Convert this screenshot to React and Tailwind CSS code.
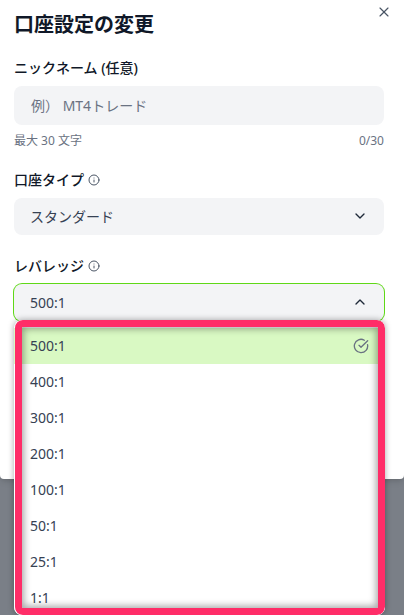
import React from 'react'
import { useState } from 'react';
import { ChevronDown, ChevronUp, CircleCheckBig, Info, X } from 'lucide-react';

const leverages = ["500:1", "400:1", "300:1", "200:1", "100:1", "50:1", "25:1", "1:1"];

export default function App() {

  const [nickname, setNickname] = useState("");
  const [accountType, setAccountType] = useState("standard");
  const [leverage, setLeverage] = useState("500:1");
  const [menuOpen, setMenuOpen] = useState(true);

  const labelClasses = "flex items-center gap-1 text-sm font-medium leading-5 text-gray-900";
  const selectClasses = "block w-full h-[37px] appearance-none rounded-lg bg-gray-100 pl-4 pr-10 text-sm text-gray-700 outline-none";

  // Own option list instead of the browser's popup
  const toggleMenu = (e) => {
    e.preventDefault();
    setMenuOpen(!menuOpen);
  }

  const handlePick = (value) => {
    setLeverage(value);
    setMenuOpen(false);
  }

  return (
    <div className="min-h-screen bg-[#7a7f87] font-['Noto_Sans','Noto_Sans_CJK_JP',sans-serif]">
      <div role="dialog" aria-labelledby="dialog-title" className="relative bg-white pl-3.5 pr-5 pt-2.5 pb-[158px] rounded-b-sm shadow-md">

        <button type="button" aria-label="閉じる" className="absolute right-3 top-1 text-gray-600">
          <X className="w-4 h-4" strokeWidth={1.75} />
        </button>

        <h1 id="dialog-title" className="text-xl font-bold leading-[30px] text-gray-900">口座設定の変更</h1>

        {/* Nickname */}
        <div className="mt-[18px]">
          <label htmlFor="nickname" className={labelClasses}>ニックネーム (任意)</label>
          <input
            id="nickname"
            type="text"
            maxLength={30}
            value={nickname}
            onChange={(e) => setNickname(e.target.value)}
            placeholder="例） MT4トレード"
            className="mt-2 block w-full h-[39px] rounded-lg bg-gray-100 px-[17px] text-sm text-gray-700 placeholder:text-gray-500 outline-none"
          />
          <div className="mt-2 flex justify-between text-xs leading-4 text-gray-500">
            <span>最大 30 文字</span>
            <span>{nickname.length}/30</span>
          </div>
        </div>

        {/* Account type */}
        <div className="mt-[21px]">
          <label htmlFor="account-type" className={labelClasses}>
            口座タイプ
            <Info className="w-3 h-3 text-gray-600" strokeWidth={2} />
          </label>
          <div className="relative mt-2">
            <select
              id="account-type"
              value={accountType}
              onChange={(e) => setAccountType(e.target.value)}
              className={selectClasses}
            >
              <option value="standard">スタンダード</option>
            </select>
            <ChevronDown className="pointer-events-none absolute right-4 top-2.5 w-4 h-4 text-gray-800" />
          </div>
        </div>

        {/* Leverage */}
        <div className="mt-[21px]">
          <label htmlFor="leverage" className={labelClasses}>
            レバレッジ
            <Info className="w-3 h-3 text-gray-600" strokeWidth={2} />
          </label>
          <div className="relative mt-2">
            <select
              id="leverage"
              value={leverage}
              onMouseDown={toggleMenu}
              onChange={(e) => setLeverage(e.target.value)}
              className={`${selectClasses} ring-1 ring-[#5fd817]`}
            >
              {leverages.map((item) => (
                <option key={item} value={item}>{item}</option>
              ))}
            </select>
            {menuOpen
              ? <ChevronUp className="pointer-events-none absolute right-4 top-2.5 w-4 h-4 text-gray-800" />
              : <ChevronDown className="pointer-events-none absolute right-4 top-2.5 w-4 h-4 text-gray-800" />}

            {menuOpen && (
              <div className="absolute left-0 -right-px top-9 z-10 h-[295px] overflow-hidden rounded-lg bg-white shadow-[0_0_6px_rgba(0,0,0,0.35)]">
                <ul role="listbox" aria-label="レバレッジ" className="pt-2">
                  {leverages.map((item) => (
                    <li key={item} role="option" aria-selected={item === leverage}>
                      <button
                        type="button"
                        onClick={() => handlePick(item)}
                        className={`flex w-full h-9 items-center justify-between px-4 text-sm text-gray-700 ${
                          item === leverage ? "bg-[#d9f9c3]" : "bg-white"
                        }`}
                      >
                        {item}
                        {item === leverage && <CircleCheckBig className="w-4 h-4 text-gray-500" />}
                      </button>
                    </li>
                  ))}
                </ul>
                {/* Highlight frame around the options */}
                <div className="pointer-events-none absolute inset-y-0 left-px right-0 rounded-lg border-7 border-[#ff2d68] shadow-[inset_0_0_7px_2px_rgba(0,0,0,0.35)]" />
              </div>
            )}
          </div>
        </div>
      </div>
    </div>
  )
}
